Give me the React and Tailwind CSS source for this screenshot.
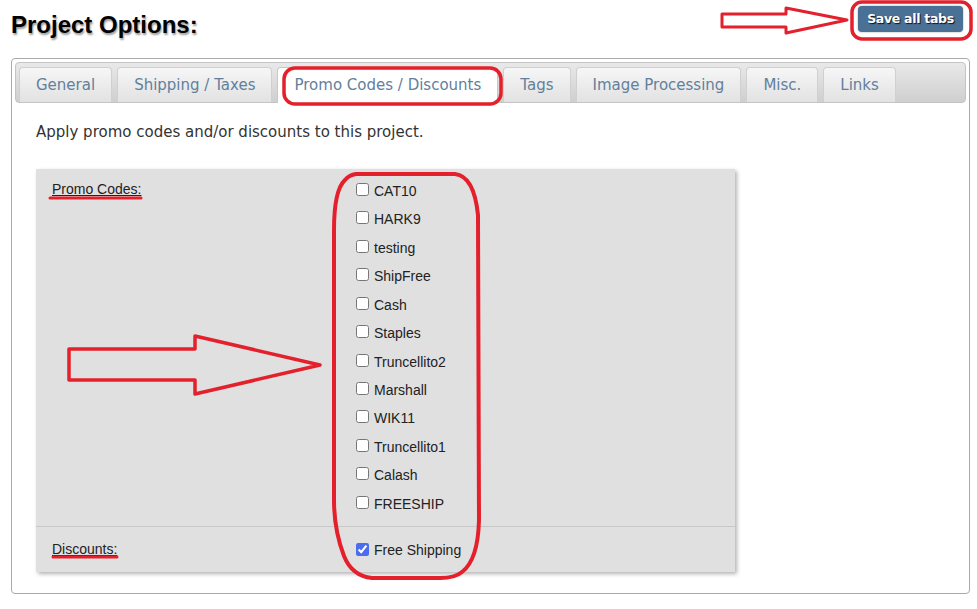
import React from "react";

const codes = [
  "CAT10",
  "HARK9",
  "testing",
  "ShipFree",
  "Cash",
  "Staples",
  "Truncellito2",
  "Marshall",
  "WIK11",
  "Truncellito1",
  "Calash",
  "FREESHIP",
];

const tabs = [
  "General",
  "Shipping / Taxes",
  "Promo Codes / Discounts",
  "Tags",
  "Image Processing",
  "Misc.",
  "Links",
];

function Annotations() {
  const red = "#e3202b";
  return (
    <svg
      className="pointer-events-none absolute left-0 top-0"
      width="977"
      height="609"
      viewBox="0 0 977 609"
      fill="none"
      stroke={red}
      strokeWidth="3.5"
      strokeLinejoin="round"
      strokeLinecap="round"
    >
      <path d="M722 14 L786 14 L786 8 L847 20 L786 33 L786 27 L722 27 Z" strokeWidth="3" />
      <rect x="852" y="2" width="119" height="37" rx="10" />
      <rect x="284" y="68" width="217" height="36" rx="11" />
      <path d="M69 349 L195 349 L195 336 L320 365 L195 394 L195 380 L69 380 Z" />
      <path d="M356 174 L455 174 Q474 176 478 215 L479 520 Q478 560 462 572 Q455 578 440 578 L372 578 Q352 576 344 556 Q334 530 334 500 L334 230 Q334 190 345 180 Q349 175 356 174 Z" strokeWidth="4" />
      <path d="M50 198 L141 198" strokeWidth="3" />
      <path d="M53 557 L117 557" strokeWidth="3" />
    </svg>
  );
}

export default function App() {
  return (
    <div className="relative w-[977px] h-[609px] bg-white overflow-hidden">
      <div className="px-[11px] pr-[7px]">
        <div className="flex items-start justify-between">
          <h1
            className="pt-[11px] text-[24px] leading-[28px] font-bold text-black [text-shadow:1px_2px_2px_rgba(0,0,0,0.4)]"
            style={{ fontFamily: '"Liberation Sans", Arial, sans-serif' }}
          >
            Project Options:
          </h1>
          <button
            className="mt-[6px] mr-[7px] h-[26px] w-[105px] rounded-[4px] bg-[#4a7095] text-[12.5px] font-bold text-white [text-shadow:1px_1px_1px_rgba(0,0,0,0.85)] shadow-[0_0_2px_rgba(0,0,0,0.4)]"
            style={{ fontFamily: '"DejaVu Sans", Verdana, sans-serif', letterSpacing: "-0.3px" }}
          >
            Save all tabs
          </button>
        </div>

        <div
          className="mt-[19px] h-[536px] rounded-[4px] border border-[#aaaaaa] p-[3px]"
          style={{ fontFamily: '"DejaVu Sans", Verdana, sans-serif' }}
        >
          <div className="flex h-[41px] items-end gap-[5px] rounded-[4px] border border-[#c4c4c4] bg-gradient-to-b from-[#e9e9e9] to-[#cfcfcf] pl-[3px]">
            {tabs.map((t) => {
              const active = t === "Promo Codes / Discounts";
              return (
                <div
                  key={t}
                  className={
                    "flex h-[35px] items-center rounded-t-[4px] border border-b-0 px-4 text-[15px] " +
                    (active
                      ? "relative top-[1px] h-[36px] border-[#c8c8c8] bg-white text-[#62809c]"
                      : "border-[#d0d0d0] bg-gradient-to-b from-[#f6f6f6] via-[#ececec] to-[#e2e2e2] text-[#62809c]")
                  }
                >
                  {t}
                </div>
              );
            })}
          </div>

          <div className="px-[21px] pt-[19px]">
            <p className="text-[15px] leading-[20px] text-[#333333]">
              Apply promo codes and/or discounts to this project.
            </p>

            <div
              className="mt-[27px] w-[699px] bg-[#e0e0e0] shadow-[2px_2px_4px_rgba(0,0,0,0.3)] text-[14px] text-[#222222]"
              style={{ fontFamily: '"Liberation Sans", Arial, sans-serif' }}
            >
              <div className="flex border-b border-[#c8c8c8] pb-[6px] pt-[10px]">
                <div className="w-[320px] pl-[16px] pt-[1px] leading-[18px]">
                  <span className="underline">Promo Codes:</span>
                </div>
                <div className="flex flex-col">
                  {codes.map((c) => (
                    <label key={c} className="flex h-[28.43px] items-start gap-[4px]">
                      <input type="checkbox" className="mt-[4px] h-[13px] w-[13px] m-0" />
                      <span className="pl-[1px] pt-[3px] leading-[18px]">{c}</span>
                    </label>
                  ))}
                </div>
              </div>
              <div className="flex h-[45px] items-center">
                <div className="w-[320px] pl-[16px]">
                  <span className="underline">Discounts:</span>
                </div>
                <label className="flex items-center gap-[4px]">
                  <input
                    type="checkbox"
                    defaultChecked
                    className="m-0 h-[13px] w-[13px] accent-[#4a6cf0]"
                  />
                  <span className="pl-[1px] leading-[18px]">Free Shipping</span>
                </label>
              </div>
            </div>
          </div>
        </div>
      </div>
      <Annotations />
    </div>
  );
}
